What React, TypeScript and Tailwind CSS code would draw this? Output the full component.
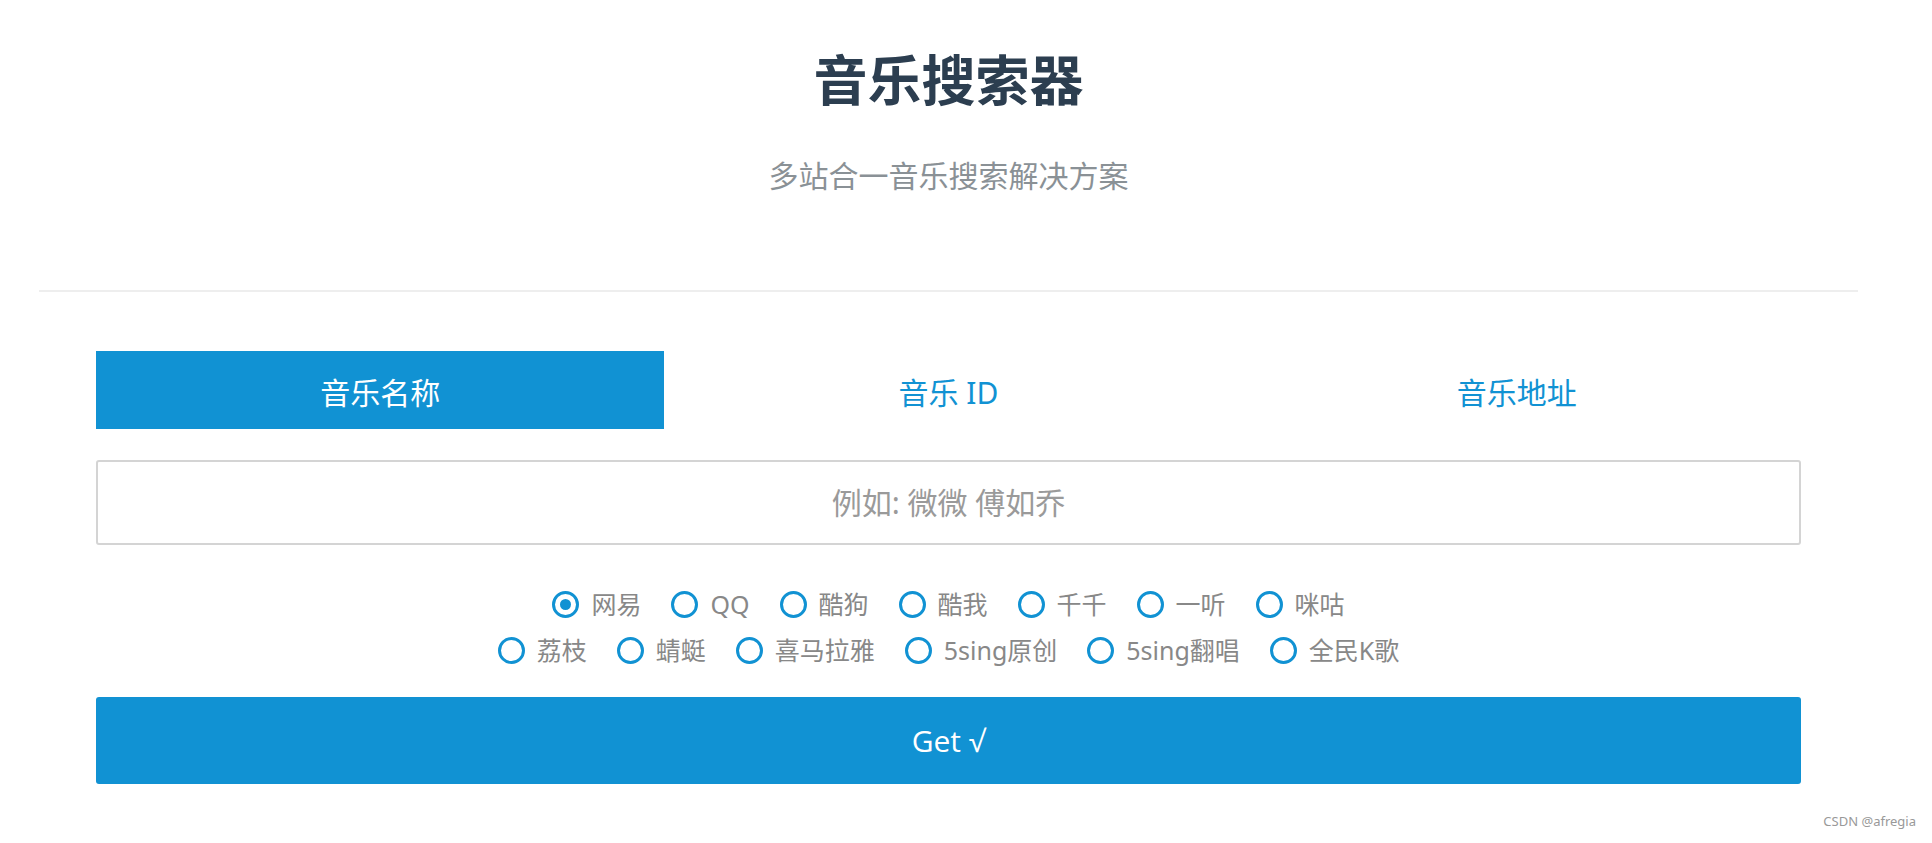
import { useState } from "react";

const TABS = ["音乐名称", "音乐 ID", "音乐地址"];

const SITES_ROW_1 = ["网易", "QQ", "酷狗", "酷我", "千千", "一听", "咪咕"];
const SITES_ROW_2 = ["荔枝", "蜻蜓", "喜马拉雅", "5sing原创", "5sing翻唱", "全民K歌"];

function Radio({ label, checked, onPick }: { label: string; checked: boolean; onPick: () => void }) {
  return (
    <label className="flex cursor-pointer items-center gap-3" onClick={onPick}>
      <span className="flex h-[27px] w-[27px] items-center justify-center rounded-full border-[3px] border-[#1192d3] bg-white">
        {checked && <span className="h-[11px] w-[11px] rounded-full bg-[#1192d3]" />}
      </span>
      <span className="text-[25px] leading-[46px] text-[#888]">{label}</span>
    </label>
  );
}

export default function App() {
  const [tab, setTab] = useState(0);
  const [site, setSite] = useState("网易");

  return (
    <div
      className="relative min-h-[843px] w-full bg-white"
      style={{ fontFamily: '"Noto Sans", "Noto Sans CJK SC", sans-serif' }}
    >
      <div className="ml-[39px] w-[1819px]">
        <header className="pt-[48px] text-center">
          <h1 className="text-[54px] font-bold leading-[64px] text-[#2c3e50]">音乐搜索器</h1>
          <p className="mt-[44px] text-[30px] leading-[40px] text-[#8a9196]">多站合一音乐搜索解决方案</p>
        </header>

        <div className="mt-[94px] border-t-2 border-[#eeeeee]" />

        <div className="px-[57px] pt-[59px]">
          <div className="grid h-[78px] grid-cols-3">
            {TABS.map((t, i) => (
              <button
                key={t}
                onClick={() => setTab(i)}
                className={
                  i === tab
                    ? "bg-[#1192d3] pt-[4px] text-[30px] text-white"
                    : "bg-white pt-[4px] text-[30px] text-[#1192d3]"
                }
              >
                {t}
              </button>
            ))}
          </div>

          <input
            className="mt-[31px] h-[85px] w-full rounded-[3px] border-2 border-[#d4d4d4] bg-white text-center text-[30px] text-[#555] outline-none placeholder:text-[#9a9a9a]"
            placeholder="例如: 微微 傅如乔"
          />

          <div className="mt-[36px] flex flex-col items-center">
            <div className="flex gap-[30px]">
              {SITES_ROW_1.map((s) => (
                <Radio key={s} label={s} checked={site === s} onPick={() => setSite(s)} />
              ))}
            </div>
            <div className="flex gap-[30px]">
              {SITES_ROW_2.map((s) => (
                <Radio key={s} label={s} checked={site === s} onPick={() => setSite(s)} />
              ))}
            </div>
          </div>

          <button
            className="mt-[24px] h-[87px] w-full rounded-[3px] bg-[#1192d3] text-[30px] text-white"
            style={{ fontFamily: '"Open Sans", sans-serif' }}
          >
            Get √
          </button>
        </div>
      </div>

      <span className="absolute bottom-[12px] right-[16px] text-[13px] text-[#999]">CSDN @afregia</span>
    </div>
  );
}
